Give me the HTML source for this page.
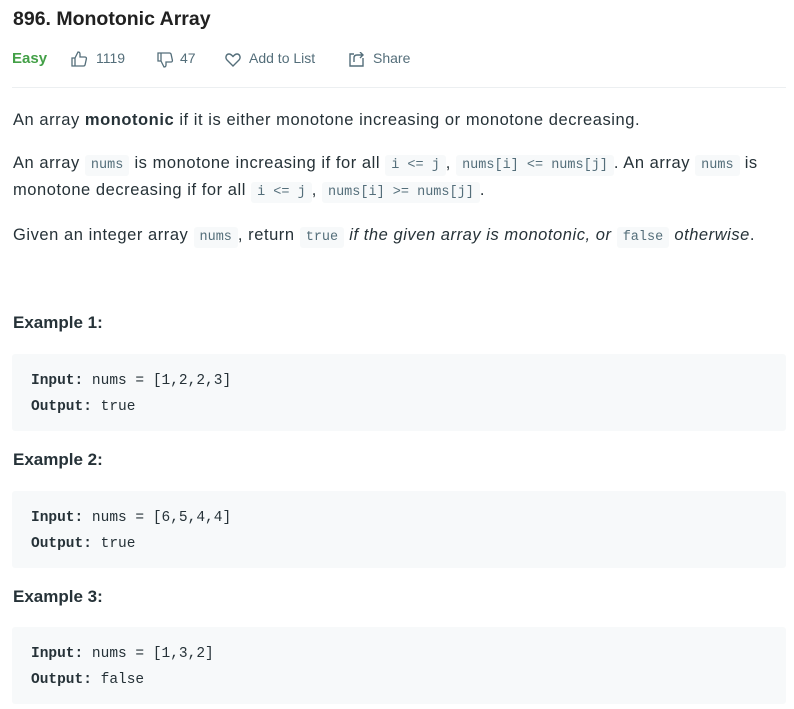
<!DOCTYPE html>
<html><head><style>
*{margin:0;padding:0;box-sizing:border-box}
body{width:794px;height:709px;background:#fff;font-family:"Liberation Sans",sans-serif;color:#263238;position:relative;overflow:hidden}
.a{position:absolute;white-space:nowrap}
h1{font-size:19.5px;font-weight:bold;color:#212121;left:13px;top:8px}
.meta{top:50px;font-size:14px;color:#546e7a}
.p{font-size:16.5px;letter-spacing:0.55px;left:13px;color:#263238}
code{font-family:"Liberation Mono",monospace;font-size:13.5px;letter-spacing:0;background:#f7f9fa;color:#546e7a;padding:3px 6px;border-radius:3px}
.h{font-size:17px;font-weight:bold;left:13px;color:#263238}
.box{position:absolute;left:12px;width:774px;height:77px;background:#f7f9fa;border-radius:3px;font-family:"Liberation Mono",monospace;font-size:14.5px;color:#263238;padding:14px 19px;line-height:26px}
</style></head><body>
<h1 class="a">896. Monotonic Array</h1>
<div class="a meta" style="left:12px;color:#43a047;font-weight:bold;font-size:15px">Easy</div>
<svg class="a" style="left:71px;top:51px" width="17" height="16" viewBox="0 0 17 16" fill="none" stroke="#546e7a" stroke-width="1.3"><path d="M1 7h3v8H1zM4 7l3-6c1.5 0 2 1 2 2v3h5c1 0 1.6.8 1.4 1.7l-1.3 6c-.2.8-.8 1.3-1.6 1.3H4"/></svg>
<div class="a meta" style="left:96px">1119</div>
<svg class="a" style="left:157px;top:52px" width="17" height="16" viewBox="0 0 17 16" fill="none" stroke="#546e7a" stroke-width="1.3"><path d="M1 1h3v8H1zM4 9l3 6c1.5 0 2-1 2-2v-3h5c1 0 1.6-.8 1.4-1.7l-1.3-6C13.9 1.5 13.3 1 12.5 1H4"/></svg>
<div class="a meta" style="left:180px">47</div>
<svg class="a" style="left:225px;top:53px" width="16" height="14" viewBox="0 0 16 14" fill="none" stroke="#546e7a" stroke-width="1.4"><path d="M8 13L2 7C0 5 1 1 4 1c2 0 3 1.5 4 2.5C9 2.5 10 1 12 1c3 0 4 4 2 6z"/></svg>
<div class="a meta" style="left:249px">Add to List</div>
<svg class="a" style="left:349px;top:52px" width="16" height="15" viewBox="0 0 16 15" fill="none" stroke="#546e7a" stroke-width="1.4"><path d="M5 2H1v12h13V6M5 10V6c0-2 1-3 3-3h6M11 0l3 3-3 3"/></svg>
<div class="a meta" style="left:373px">Share</div>
<div class="a" style="left:12px;top:87px;width:774px;height:1px;background:#eceff1"></div>
<div class="a p" style="top:111px">An array <b>monotonic</b> if it is either monotone increasing or monotone decreasing.</div>
<div class="a p" style="top:154px">An array <code>nums</code> is monotone increasing if for all <code>i &lt;= j</code>, <code>nums[i] &lt;= nums[j]</code>. An array <code>nums</code> is</div>
<div class="a p" style="top:181px">monotone decreasing if for all <code>i &lt;= j</code>, <code>nums[i] &gt;= nums[j]</code>.</div>
<div class="a p" style="top:226px">Given an integer array <code>nums</code>, return <code>true</code> <i>if the given array is monotonic, or</i> <code>false</code> <i>otherwise</i>.</div>
<div class="a h" style="top:313px">Example 1:</div>
<div class="box" style="top:354px"><b>Input:</b> nums = [1,2,2,3]<br><b>Output:</b> true</div>
<div class="a h" style="top:450px">Example 2:</div>
<div class="box" style="top:491px"><b>Input:</b> nums = [6,5,4,4]<br><b>Output:</b> true</div>
<div class="a h" style="top:587px">Example 3:</div>
<div class="box" style="top:627px"><b>Input:</b> nums = [1,3,2]<br><b>Output:</b> false</div>
</body></html>
